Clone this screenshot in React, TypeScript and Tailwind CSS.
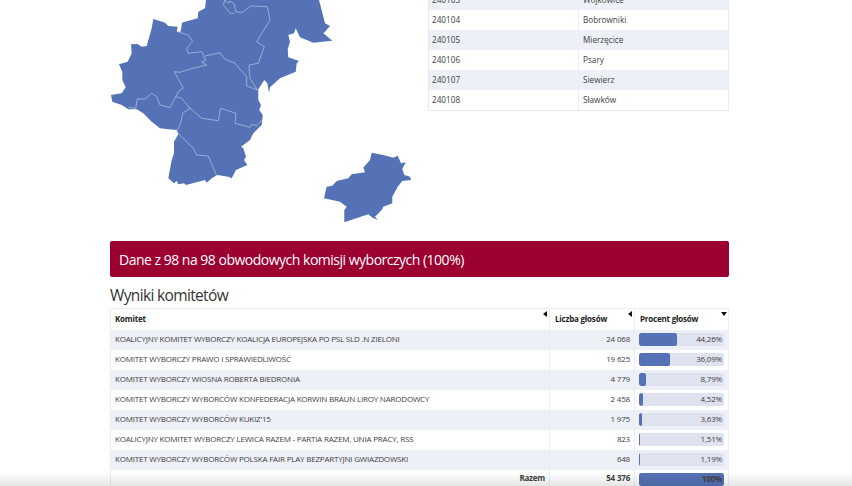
const gminy = [
  ["240103", "Wojkowice"],
  ["240104", "Bobrowniki"],
  ["240105", "Mierzęcice"],
  ["240106", "Psary"],
  ["240107", "Siewierz"],
  ["240108", "Sławków"],
];

const komitety = [
  { name: "KOALICYJNY KOMITET WYBORCZY KOALICJA EUROPEJSKA PO PSL SLD .N ZIELONI", votes: "24 068", pct: "44,26%", bar: 44.26 },
  { name: "KOMITET WYBORCZY PRAWO I SPRAWIEDLIWOŚĆ", votes: "19 625", pct: "36,09%", bar: 36.09 },
  { name: "KOMITET WYBORCZY WIOSNA ROBERTA BIEDRONIA", votes: "4 779", pct: "8,79%", bar: 8.79 },
  { name: "KOMITET WYBORCZY WYBORCÓW KONFEDERACJA KORWIN BRAUN LIROY NARODOWCY", votes: "2 458", pct: "4,52%", bar: 4.52 },
  { name: "KOMITET WYBORCZY WYBORCÓW KUKIZ'15", votes: "1 975", pct: "3,63%", bar: 3.63 },
  { name: "KOALICYJNY KOMITET WYBORCZY LEWICA RAZEM - PARTIA RAZEM, UNIA PRACY, RSS", votes: "823", pct: "1,51%", bar: 1.51 },
  { name: "KOMITET WYBORCZY WYBORCÓW POLSKA FAIR PLAY BEZPARTYJNI GWIAZDOWSKI", votes: "648", pct: "1,19%", bar: 1.19 },
];

// coordinates are page pixels, traced off the reference
function MapSvg() {
  return (
    <svg width="305" height="230" viewBox="110 0 305 230" className="block shrink-0">
      <path
        fill="#5572b6"
        d="M206 0L205 8.3L198.3 11.7L197.7 18.3L185 21.7L182 22.7L180.7 31.7L176.7 31.7L177.7 26.7L168.3 26L165 22.7L153.3 19L151.7 28.3L146.7 46L141.7 46.7L137.3 44L131 44.3L131.7 53.3L127.7 61.7L119 64.3L122.3 71.7L122.3 80L125.7 87.3L121.7 93.3L111 95L112.3 101.7L121.7 105L128.3 109.3L136.7 109.3L143.3 113.3L151.7 121.7L160 128.3L168.3 129.3L176.7 130L178.3 134.3L174 141.7L174 153.3L171.7 160L168.3 178.3L174 183.3L176.7 181L178.3 184.3L184 183.3L186 185L205 180L206.7 182.7L211.7 178.3L217.3 175L228.3 176.7L231.7 178.3L236 170L247.3 165L244 160L246 156.7L243.3 148.3L241 146.7L250 140L253.3 133.3L261.7 125L262.7 115L259.3 110L261 105L258.3 100L258.3 89.3L264.3 80L267.3 83.3L269 92.7L270 87.3L280 78.3L295.7 71.7L296.7 63.3L299 61L288.3 57.3L287.7 49.3L290 41.7L288.3 35L294 33.3L295.7 28.3L300 37.3L313.3 42.7L332.3 40.7L323.3 33.3L325 31.7L330 26L325 23.3L319 0Z"
      />
      <path
        fill="#5572b6"
        d="M371.7 152.7L383.3 155L393.3 157.7L397.7 155.7L401 163.3L405.7 162.3L402.3 169L404.3 175L410 176.7L411 180L402.3 181L397.7 186.7L392.3 196.7L392.3 203.3L383.3 206.7L381.7 210L375 216.7L377.7 220L373 218L368.3 214.3L344.3 222.3L344.3 210L346.7 206.7L340 201.7L324 198.3L326.7 186.7L332.3 185.7L336.7 181L348.3 178.3L351.7 174.3L365 172.3L363.3 167.7L370 160Z"
      />
      <g fill="none" stroke="#b9c6e4" strokeWidth="0.7">
        <path d="M177.3 31.7L188.3 35L192.7 41.7L186.7 48.3L188.3 53.3L201.7 51.7L205.7 60L201.7 62.3L206.7 65L190 69L180 72.3L174.3 71.7L183.3 88.3L179 90.7L175.7 96.7L181.7 98.3L190 108.3L201.7 118.3L218.3 120.7L220.7 108.3L236 113.3L235 123.3L250 127.3L251.7 124.3L256.7 125.7L261.7 120" />
        <path d="M205 56L220 52.7L225 59.3L235 63.3L246.7 76.7L246.7 86L257.3 90" />
        <path d="M257.3 90L250 78.3L249 65L258.3 63.3L264.3 46.7L256.7 41.7L270 20L267.3 6.7L251 6L241.7 12.7L235.7 11.7L234.3 4L230 1L228.3 3.3L225 0" />
        <path d="M225 0L223.3 5L225 6.7L230 13.3L234.3 13.3" />
        <path d="M128.3 107.3L135.7 108.3L137.3 99L145 99L151.7 93.3L156.7 96.7L160 105L170 107.7L175.7 96.7" />
        <path d="M190 108.3L182.7 113.3L180.7 123.3L176.7 131.7L193.3 148.3L196.7 155L208.3 156L216.7 176" />
      </g>
    </svg>
  );
}

function SortMark({ down }: { down?: boolean }) {
  return (
    <svg width="6" height="6" viewBox="0 0 6 6" className="absolute right-[1px] top-[2px]">
      <path fill="#111" d={down ? "M0 1H6L3 5Z" : "M1 3L5 0V6Z"} />
    </svg>
  );
}

function Bar({ value, label, strong }: { value: number; label: string; strong?: boolean }) {
  return (
    <div className="relative h-[13px] rounded-[2px] bg-[#dfe3f0] overflow-hidden">
      <div className="absolute left-0 top-0 bottom-0 bg-[#5572b6] min-w-[1px] rounded-[2px]" style={{ width: `${value}%` }} />
      <div className={`relative pr-[2px] text-right leading-[11px] ${strong ? "font-bold" : ""}`}>{label}</div>
    </div>
  );
}

export default function App() {
  return (
    <div className="relative h-[486px] w-[852px] overflow-hidden bg-white pl-[110px] pr-[123px] font-['Open_Sans',sans-serif] text-[#404040]">
      <div className="flex h-[241px] items-start">
        <MapSvg />
        <div className="ml-[13px] flex h-[111px] flex-1 flex-col justify-end overflow-hidden border-b border-[#e8eaf0] border-x">
          {gminy.map(([code, name], i) => (
            <div key={code} className={`flex h-[20px] shrink-0 items-center text-[8.2px] ${i % 2 === 0 ? "bg-[#eef0f7]" : "bg-white"}`}>
              <div className="w-[150px] h-full flex items-center border-r border-[#eceef3] pl-[3px]">{code}</div>
              <div className="pl-[4px]">{name}</div>
            </div>
          ))}
        </div>
      </div>

      <div className="flex h-[36px] items-center rounded-[2px] bg-[#9b0031] pl-[9px] text-[14px] tracking-[-0.5px] text-white">
        Dane z 98 na 98 obwodowych komisji wyborczych (100%)
      </div>

      <h2 className="mt-[7px] h-[24px] text-[15.5px] leading-[22px] tracking-[-0.65px] text-[#333]">Wyniki komitetów</h2>

      <table className="w-full table-fixed border-collapse border border-[#eceef3] text-[8px] tracking-[-0.2px]">
        <colgroup>
          <col className="w-[439px]" />
          <col className="w-[85px]" />
          <col />
        </colgroup>
        <thead>
          <tr className="h-[21px] font-bold text-[#222]">
            <th className="relative border-r border-[#eceef3] pl-[4px] text-left">
              Komitet
              <SortMark />
            </th>
            <th className="relative border-r border-[#eceef3] pl-[5px] text-left">
              Liczba głosów
              <SortMark />
            </th>
            <th className="relative pl-[5px] text-left">
              Procent głosów
              <SortMark down />
            </th>
          </tr>
        </thead>
        <tbody>
          {komitety.map((k, i) => (
            <tr key={k.name} className={`h-[20px] ${i % 2 === 0 ? "bg-[#eef0f7]" : "bg-white"}`}>
              <td className="border-r border-[#eceef3] pl-[4px] pb-[2px] whitespace-nowrap">{k.name}</td>
              <td className="border-r border-[#eceef3] pr-[4px] pb-[2px] text-right">{k.votes}</td>
              <td className="pl-[4px] pr-[4px]">
                <Bar value={k.bar} label={k.pct} />
              </td>
            </tr>
          ))}
          <tr className="h-[20px] font-bold">
            <td className="border-r border-[#eceef3] pr-[4px] pb-[2px] text-right">Razem</td>
            <td className="border-r border-[#eceef3] pr-[4px] pb-[2px] text-right">54 376</td>
            <td className="pl-[4px] pr-[4px]">
              <Bar value={100} label="100%" strong />
            </td>
          </tr>
        </tbody>
      </table>

      <div className="absolute bottom-0 left-0 right-0 h-[14px] bg-gradient-to-b from-transparent to-black/10" />
    </div>
  );
}
